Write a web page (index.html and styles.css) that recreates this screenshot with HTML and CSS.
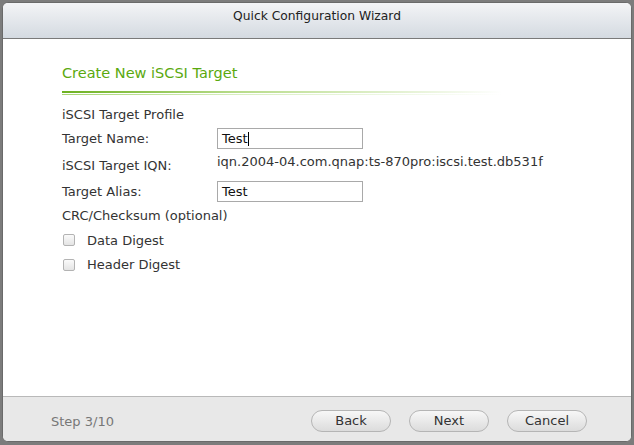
FILE: index.html
```html
<!DOCTYPE html>
<html>
<head>
<meta charset="utf-8">
<link rel="stylesheet" href="styles.css">
</head>
<body>
<div class="dialog">
  <div class="header">Quick Configuration Wizard</div>
  <div class="content">
    <h2 class="heading">Create New iSCSI Target</h2>
    <div class="rule"></div>
    <div class="form">
      <div class="row"><span>iSCSI Target Profile</span></div>
      <div class="row"><span class="label">Target Name:</span><div class="input">Test<span class="caret"></span></div></div>
      <div class="row tall"><span class="label">iSCSI Target IQN:</span><span class="value">iqn.2004-04.com.qnap:ts-870pro:iscsi.test.db531f</span></div>
      <div class="row"><span class="label">Target Alias:</span><div class="input">Test</div></div>
      <div class="row"><span>CRC/Checksum (optional)</span></div>
      <div class="row check"><span class="box"></span><span>Data Digest</span></div>
      <div class="row check"><span class="box"></span><span>Header Digest</span></div>
    </div>
  </div>
  <div class="footer">
    <span class="step">Step 3/10</span>
    <div class="buttons">
      <span class="btn">Back</span>
      <span class="btn">Next</span>
      <span class="btn">Cancel</span>
    </div>
  </div>
</div>
</body>
</html>
```
FILE: styles.css
```css
html, body { margin: 0; padding: 0; }
body {
  width: 634px;
  height: 445px;
  background: #7c7c7c;
  padding: 2px 2px 3px 2px;
  box-sizing: border-box;
  font-family: "DejaVu Sans", Verdana, sans-serif;
  overflow: hidden;
}
.dialog {
  width: 630px;
  height: 440px;
  box-sizing: border-box;
  border: 1px solid #6a6a6a;
  border-radius: 6px;
  background: #fff;
  display: flex;
  flex-direction: column;
  overflow: hidden;
}
.header {
  height: 35px;
  border-bottom: 1px solid #7a7a7a;
  background: linear-gradient(#f3f4f6, #d4dae1);
  text-align: center;
  font-size: 12.3px;
  line-height: 27px;
  color: #222;
}
.content {
  flex: 1;
  padding: 23px 0 0 59px;
}
.heading {
  margin: 0;
  font-weight: normal;
  font-size: 14.5px;
  line-height: 22px;
  color: #5aa90e;
}
.rule {
  margin-top: 7px;
  width: 440px;
  height: 4px;
  background:
    linear-gradient(to right, #6db121, #b8dc8a 40%, rgba(255,255,255,0) 100%) top / 100% 2px no-repeat,
    linear-gradient(to right, #a8d574, #d8eec0 40%, rgba(255,255,255,0) 100%) bottom / 100% 1px no-repeat;
}
.form {
  margin-top: 7px;
  font-size: 13px;
  color: #333;
}
.row {
  height: 24.5px;
  display: flex;
  align-items: center;
  white-space: nowrap;
}
.row.tall { height: 28px; }
.label { width: 155px; flex: none; }
.value { position: relative; top: -4px; }
.input {
  width: 140px;
  height: 19px;
  border: 1px solid #a9a9a9;
  padding-left: 4px;
  line-height: 19px;
  font-size: 13px;
  color: #111;
  display: flex;
  align-items: center;
}
.caret {
  display: inline-block;
  width: 1px;
  height: 14px;
  background: #000;
}
.check { gap: 12px; padding-left: 1px; }
.box {
  width: 10px;
  height: 10px;
  border: 1px solid #b3b3b3;
  border-radius: 2px;
  background: linear-gradient(#fafafa, #e4e4e4);
}
.footer {
  height: 45px;
  box-sizing: border-box;
  border-top: 1px solid #b9b9b9;
  background: #e8e8e8;
  display: flex;
  align-items: center;
  justify-content: space-between;
  padding: 4px 44px 0 48px;
}
.step { font-size: 13px; color: #777; }
.buttons { display: flex; gap: 18px; }
.btn {
  width: 78px;
  height: 20px;
  border: 1px solid #b5b5b5;
  border-radius: 11px;
  background: linear-gradient(#f7f7f7, #dcdcdc);
  text-align: center;
  line-height: 20px;
  font-size: 13px;
  color: #333;
}
```
